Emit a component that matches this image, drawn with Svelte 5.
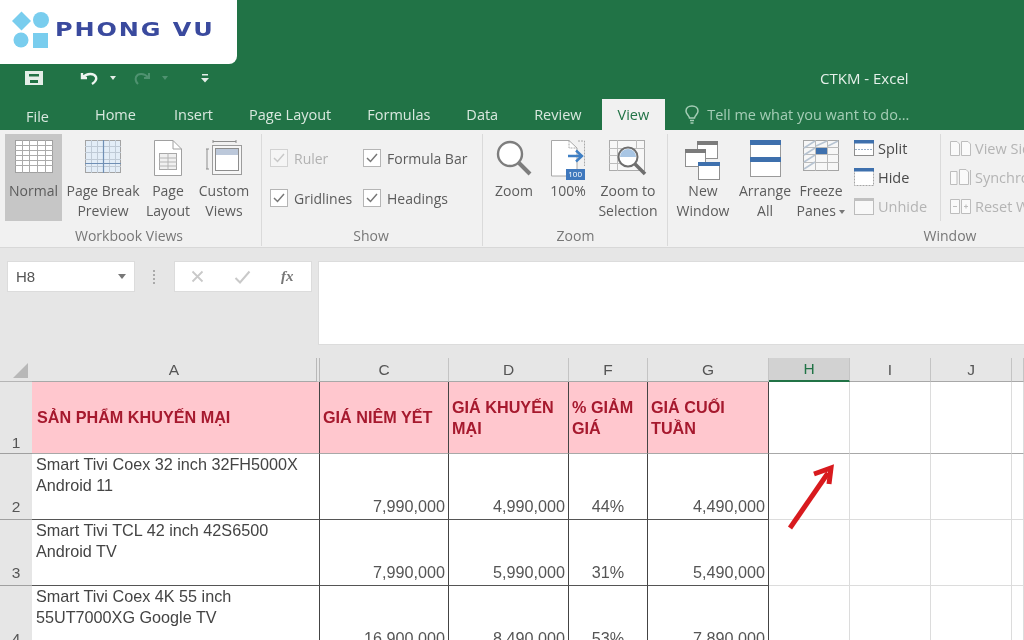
<script>
  const tabs = ["Home", "Insert", "Page Layout", "Formulas", "Data", "Review"];
  const cols = [
    { name: "A", kind: "first" },
    { name: "C", kind: "data" },
    { name: "D", kind: "data" },
    { name: "F", kind: "data" },
    { name: "G", kind: "data" },
    { name: "H", kind: "sel" },
    { name: "I", kind: "" },
    { name: "J", kind: "" },
    { name: "", kind: "" }
  ];
  const heads = ["SẢN PHẨM KHUYẾN MẠI", "GIÁ NIÊM YẾT", "GIÁ KHUYẾN MẠI", "% GIẢM GIÁ", "GIÁ CUỐI TUẦN"];
  const rows = [
    { n: 2, name: "Smart Tivi Coex 32 inch 32FH5000X Android 11", vals: ["7,990,000", "4,990,000", "44%", "4,490,000"] },
    { n: 3, name: "Smart Tivi TCL 42 inch 42S6500 Android TV", vals: ["7,990,000", "5,990,000", "31%", "5,490,000"] },
    { n: 4, name: "Smart Tivi Coex 4K 55 inch 55UT7000XG Google TV", vals: ["16,900,000", "8,490,000", "53%", "7,890,000"] }
  ];
</script>

<div class="app">
  <div class="logo">
    <svg width="38" height="38" viewBox="0 0 38 38">
      <path d="M0 10 L9.500 0.500 L19 10 L9.500 19.500 Z" fill="#79cdee" />
      <circle cx="29" cy="9" r="8" fill="#79cdee" />
      <circle cx="9" cy="29" r="7.500" fill="#79cdee" />
      <rect x="21" y="22" width="15" height="15" fill="#79cdee" />
    </svg>
    <span class="logo-text">PHONG VU</span>
  </div>

  <header class="top">
    <div class="qat">
      <svg class="save" width="18" height="14" viewBox="0 0 18 14">
        <path fill-rule="evenodd" d="M0 0 H18 V14 H0 Z M4 3 V5.500 H14 V3 Z M5 9 V12 H13 V9 Z" fill="#e4eee8" />
      </svg>
      <svg class="undo" width="20" height="14" viewBox="0 0 20 14">
        <path d="M2 2 V7 H7 M2.500 6.500 C7 2 14 2 16 6 C17 9 15 11 12 13" fill="none" stroke="#eef5f0" stroke-width="2.400" />
      </svg>
      <span class="caret"></span>
      <svg class="redo" width="18" height="14" viewBox="0 0 18 14">
        <path d="M16 2 V7 H11 M15.500 6.500 C11 2 5 2 3 6 C2 9 3 11 5 13" fill="none" stroke="#4f9270" stroke-width="2" />
      </svg>
      <span class="caret dim"></span>
      <svg class="more" width="8" height="10" viewBox="0 0 8 10">
        <path d="M1 1 H7 V2.500 H1 Z M0 5 H8 L4 9.500 Z" fill="#e4eee8" />
      </svg>
      <span class="title">CTKM - Excel</span>
    </div>
    <nav class="tabs">
      <span class="tab file">File</span>
      {#each tabs as t, i}
        <span class="tab" class:home={i === 0}>{t}</span>
      {/each}
      <span class="tab active">View</span>
      <span class="tell">
        <svg width="14" height="19" viewBox="0 0 14 19">
          <path d="M4.500 13 C4 10 1 9 1 6 C1 3 3.500 1 7 1 C10.500 1 13 3 13 6 C13 9 10 10 9.500 13 Z M5 15.500 H9 M5.500 18 H8.500" fill="none" stroke="#a5cdb6" stroke-width="1.500" />
        </svg>
        Tell me what you want to do...
      </span>
    </nav>
  </header>

  <section class="ribbon">
    <div class="group workbook">
      <div class="body">
        <div class="big normal active">
          <div class="icon">
            <svg width="38" height="33" viewBox="0 0 38 33">
              <rect x="0.500" y="0.500" width="37" height="32" fill="#fff" stroke="#a0a0a0" />
              <path d="M0 5.500 H38 M0 10.500 H38 M0 15.500 H38 M0 20.500 H38 M0 25.500 H38 M7.500 0 V33 M14.500 0 V33 M22.500 0 V33 M30.500 0 V33" stroke="#ababab" />
            </svg>
          </div>
          <span>Normal</span>
        </div>
        <div class="big pagebreak">
          <div class="icon">
            <svg width="36" height="33" viewBox="0 0 36 33">
              <rect x="0.500" y="0.500" width="35" height="32" fill="#e3edf7" stroke="#a3a3a3" />
              <path d="M0 6.500 H36 M0 12.500 H36 M0 19.500 H36 M0 26.500 H36 M6.500 0 V33 M12.500 0 V33 M24.500 0 V33 M30.500 0 V33" stroke="#bfcad6" />
              <path d="M18.500 0 V33 M0 23.500 H36" stroke="#6f8fb5" stroke-width="1.200" />
            </svg>
          </div>
          <span>Page Break<br />Preview</span>
        </div>
        <div class="big pagelayout">
          <div class="icon">
            <svg width="28" height="36" viewBox="0 0 28 36">
              <path d="M0.500 0.500 H19 L27.500 9 V35.500 H0.500 Z" fill="#fff" stroke="#a0a0a0" />
              <path d="M19 0.500 V9 H27.500" fill="none" stroke="#a0a0a0" />
              <rect x="5.500" y="13.500" width="17" height="16" fill="#f0f0f0" stroke="#a8a8a8" />
              <path d="M5 18 H23 M5 22 H23 M5 26 H23 M14 13 V30" stroke="#b4b4b4" />
            </svg>
          </div>
          <span>Page<br />Layout</span>
        </div>
        <div class="big custom">
          <div class="icon">
            <svg width="36" height="35" viewBox="0 0 36 35">
              <path d="M1 9 V29 M0 9 H3 M0 29 H3 M7 1.500 H30 M7 0 V3 M30 0 V3" fill="none" stroke="#8d8d8d" />
              <rect x="6.500" y="5.500" width="29" height="29" fill="#f6f6f6" stroke="#9c9c9c" />
              <rect x="9.500" y="8.500" width="23" height="22" fill="#fff" stroke="#8d8d8d" />
              <rect x="10" y="9" width="22" height="6" fill="#bcc8da" />
            </svg>
          </div>
          <span>Custom<br />Views</span>
        </div>
      </div>
      <div class="label">Workbook Views</div>
    </div>

    <div class="group show">
      <div class="body checks">
        <label class="check off"><span class="box"><svg width="12" height="10" viewBox="0 0 12 10"><path d="M1 5 L4.500 8.500 L11 1" /></svg></span>Ruler</label>
        <label class="check"><span class="box"><svg width="12" height="10" viewBox="0 0 12 10"><path d="M1 5 L4.500 8.500 L11 1" /></svg></span>Formula Bar</label>
        <label class="check"><span class="box"><svg width="12" height="10" viewBox="0 0 12 10"><path d="M1 5 L4.500 8.500 L11 1" /></svg></span>Gridlines</label>
        <label class="check"><span class="box"><svg width="12" height="10" viewBox="0 0 12 10"><path d="M1 5 L4.500 8.500 L11 1" /></svg></span>Headings</label>
      </div>
      <div class="label">Show</div>
    </div>

    <div class="group zoom">
      <div class="body">
        <div class="big zoom-btn">
          <div class="icon">
            <svg width="36" height="36" viewBox="0 0 36 36">
              <circle cx="14" cy="14" r="12" fill="#fff" stroke="#7d7d7d" stroke-width="2.400" />
              <path d="M23 23 L34 34" stroke="#7d7d7d" stroke-width="4" />
            </svg>
          </div>
          <span>Zoom</span>
        </div>
        <div class="big hundred">
          <div class="icon">
            <svg width="34" height="40" viewBox="0 0 34 40">
              <path d="M0.500 0.500 H18 L26 8 V36 H0.500 Z" fill="#fff" stroke="#a8a8a8" />
              <path d="M18 0.500 V8 H26 M27 1 H33.500 V26" fill="none" stroke="#a8a8a8" stroke-dasharray="2 1" />
              <path d="M17 16 H31 M25 10.500 L31 16 L25 21.500" fill="none" stroke="#3f7fc4" stroke-width="2.400" />
              <rect x="15" y="29" width="19" height="11" fill="#3f78bd" />
            </svg>
            <span class="mini">100</span>
          </div>
          <span>100%</span>
        </div>
        <div class="big selection">
          <div class="icon">
            <svg width="38" height="36" viewBox="0 0 38 36">
              <rect x="0.500" y="0.500" width="35" height="30" fill="#f7f7f7" stroke="#ababab" />
              <path d="M0 8.500 H36 M0 15.500 H12 M0 23.500 H12 M8.500 0 V31 M27.500 0 V8" stroke="#bdbdbd" />
              <circle cx="19" cy="17" r="9.500" fill="#fff" stroke="#6e6e6e" stroke-width="2" />
              <path d="M11 17 A8 8 0 0 1 27 17 Z" fill="#a9c6e4" />
              <path d="M26 24 L36 34" stroke="#6e6e6e" stroke-width="3.500" />
            </svg>
          </div>
          <span>Zoom to<br />Selection</span>
        </div>
      </div>
      <div class="label">Zoom</div>
    </div>

    <div class="group window">
      <div class="body">
        <div class="big newwin">
          <div class="icon">
            <svg width="36" height="40" viewBox="0 0 36 40">
              <rect x="12.500" y="1.500" width="20" height="17" fill="#fff" stroke="#8f8f8f" />
              <rect x="12" y="1" width="21" height="4" fill="#7b7b7b" />
              <rect x="0.500" y="9.500" width="20" height="17" fill="#fff" stroke="#8f8f8f" />
              <rect x="0" y="9" width="21" height="4" fill="#7b7b7b" />
              <rect x="13.500" y="22.500" width="21" height="17" fill="#fff" stroke="#8f8f8f" />
              <rect x="13" y="22" width="22" height="4" fill="#3e70ad" />
            </svg>
          </div>
          <span>New<br />Window</span>
        </div>
        <div class="big arrange">
          <div class="icon">
            <svg width="31" height="37" viewBox="0 0 31 37">
              <rect x="0.500" y="0.500" width="30" height="36" fill="#fff" stroke="#9a9a9a" />
              <rect x="0" y="0" width="31" height="5" fill="#3e70ad" />
              <rect x="0" y="17" width="31" height="5" fill="#3e70ad" />
            </svg>
          </div>
          <span>Arrange<br />All</span>
        </div>
        <div class="big freeze">
          <div class="icon">
            <svg width="36" height="32" viewBox="0 0 36 32">
              <rect x="0.500" y="0.500" width="35" height="30" fill="#f7f7f7" stroke="#a5a5a5" />
              <path d="M0 7.500 H36 M0 14.500 H36 M0 22.500 H36 M12.500 0 V31 M24.500 0 V31" stroke="#bbb" />
              <path d="M1 8 L12 1 M1 15 L12 8 M1 22 L12 15 M1 29 L12 22 M13 6 L24 1 M25 6 L35 1" stroke="#b7c4d2" stroke-width="1.500" />
              <rect x="13" y="8" width="11" height="6" fill="#3e70ad" />
            </svg>
          </div>
          <span>Freeze<br />Panes <i class="tiny"></i></span>
        </div>
        <div class="small-col">
          <div class="small">
            <svg width="20" height="16" viewBox="0 0 20 16">
              <rect x="0.500" y="0.500" width="19" height="15" fill="#fff" stroke="#8e8e8e" />
              <rect x="0" y="0" width="20" height="3.500" fill="#3e70ad" />
              <path d="M1 9.500 H19" stroke="#9ab0c8" stroke-dasharray="2 1" />
            </svg>
            Split
          </div>
          <div class="small">
            <svg width="20" height="18" viewBox="0 0 20 18">
              <rect x="0.500" y="0.500" width="19" height="17" fill="#fff" stroke="#a5a5a5" stroke-dasharray="2 1" />
              <rect x="0" y="0" width="20" height="3.500" fill="#3e70ad" />
            </svg>
            Hide
          </div>
          <div class="small off">
            <svg width="20" height="17" viewBox="0 0 20 17">
              <rect x="0.500" y="0.500" width="19" height="16" fill="#f8f8f8" stroke="#bcbcbc" />
              <rect x="0" y="0" width="20" height="3" fill="#c0c0c0" />
            </svg>
            Unhide
          </div>
        </div>
        <div class="small-col last">
          <div class="small off">
            <svg width="21" height="15" viewBox="0 0 21 15">
              <path d="M0.500 0.500 H7 L9.500 3 V14.500 H0.500 Z M11.500 0.500 H18 L20.500 3 V14.500 H11.500 Z" fill="#fafafa" stroke="#bdbdbd" />
            </svg>
            View Side by Side
          </div>
          <div class="small off">
            <svg width="21" height="17" viewBox="0 0 21 17">
              <path d="M0.500 2.500 H7 V15.500 H0.500 Z M9.500 0.500 H16 L18.500 3 V15.500 H9.500 Z M20.500 1 V16" fill="#fafafa" stroke="#bdbdbd" />
            </svg>
            Synchronous Scrolling
          </div>
          <div class="small off">
            <svg width="21" height="15" viewBox="0 0 21 15">
              <path d="M0.500 0.500 H9.500 V14.500 H0.500 Z M11.500 0.500 H20.500 V14.500 H11.500 Z M3 7.500 H7 M14 7.500 H18 M16 5.500 V9.500" fill="#fafafa" stroke="#bdbdbd" />
            </svg>
            Reset Window Position
          </div>
        </div>
      </div>
      <div class="label">Window</div>
    </div>
  </section>

  <section class="formula">
    <div class="namebox">H8<span class="name-caret"></span></div>
    <div class="grip"></div>
    <div class="fxbox">
      <svg width="13" height="13" viewBox="0 0 13 13"><path d="M1.500 1.500 L11.500 11.500 M11.500 1.500 L1.500 11.500" stroke="#c9c9c9" stroke-width="1.800" /></svg>
      <svg width="17" height="14" viewBox="0 0 17 14"><path d="M1.500 8 L6 12.500 L15.500 1.500" fill="none" stroke="#c9c9c9" stroke-width="2" /></svg>
      <span class="fx">fx</span>
    </div>
    <div class="input"></div>
  </section>

  <section class="sheet">
    <div class="corner"><span class="tri"></span></div>
    {#each cols as c}
      <div class="colhead {c.kind}">{c.name}</div>
    {/each}

    <div class="rownum r1">1</div>
    {#each heads as h, i}
      <div class="cell head" class:first={i === 0}>{h}</div>
    {/each}
    {#each Array(4) as _}
      <div class="cell blank r1b"></div>
    {/each}

    {#each rows as r}
      <div class="rownum r2">{r.n}</div>
      <div class="cell name">{r.name}</div>
      {#each r.vals as v, i}
        <div class="cell val" class:pct={i === 2}>{v}</div>
      {/each}
      {#each Array(4) as _}
        <div class="cell blank"></div>
      {/each}
    {/each}

    <svg class="arrow" width="52" height="70" viewBox="0 0 52 70">
      <path d="M4 64 L42 9" stroke="#d81a1e" stroke-width="5" fill="none" />
      <path d="M28 10 L45 4 L43 20" stroke="#d81a1e" stroke-width="5" fill="none" />
    </svg>
  </section>
</div>

<style>
  :global(body) {
    margin: 0;
  }

  .app {
    position: relative;
    width: 1024px;
    height: 640px;
    overflow: hidden;
    font-family: "Open Sans", sans-serif;
    background: #e6e6e6;
    color: #555;
    filter: blur(0.45px);
  }

  .logo {
    position: absolute;
    left: 0;
    top: 0;
    width: 237px;
    height: 64px;
    background: #fff;
    border-bottom-right-radius: 8px;
    display: flex;
    align-items: center;
    padding-left: 12px;
    box-sizing: border-box;
    z-index: 2;
  }

  .logo svg {
    margin-top: -4px;
  }

  .logo-text {
    margin-left: 5px;
    margin-top: -7px;
    font-family: "DejaVu Sans", sans-serif;
    font-weight: 700;
    font-size: 20px;
    letter-spacing: 1.600px;
    color: #3a4a9e;
    transform: scaleX(1.200);
    transform-origin: left center;
    white-space: nowrap;
  }

  .top {
    background: #217346;
    height: 130px;
    box-sizing: border-box;
    padding-top: 61px;
  }

  .qat {
    display: flex;
    align-items: center;
    height: 34px;
    padding-left: 25px;
    margin-bottom: 4px;
  }

  .undo {
    margin-left: 37px;
  }

  .caret {
    width: 0;
    height: 0;
    border-left: 3.500px solid transparent;
    border-right: 3.500px solid transparent;
    border-top: 4px solid #e4eee8;
    margin-left: 10px;
  }

  .caret.dim {
    border-top-color: #4f9270;
    margin-left: 11px;
  }

  .redo {
    margin-left: 17px;
  }

  .more {
    margin-left: 33px;
  }

  .title {
    margin-left: 611px;
    font-size: 15px;
    color: #e6f0ea;
  }

  .tabs {
    display: flex;
    align-items: stretch;
    height: 31px;
  }

  .tab {
    padding: 0 18px;
    font-size: 14.500px;
    line-height: 31px;
    color: #d9e8df;
    white-space: nowrap;
  }

  .tab.home {
    padding-right: 20px;
    padding-left: 18px;
  }

  .tab.file {
    padding: 0 28px 0 26px;
    line-height: 35px;
  }

  .tab.active {
    margin-left: 2px;
    padding: 0 16px;
    background: #f1f1f1;
    color: #217346;
  }

  .tell {
    display: flex;
    align-items: center;
    gap: 8px;
    margin-left: 20px;
    font-size: 14.500px;
    color: #a5cdb6;
    white-space: nowrap;
  }

  .ribbon {
    display: flex;
    height: 118px;
    box-sizing: border-box;
    background: #f1f1f1;
    border-bottom: 1px solid #d8d8d8;
    overflow: hidden;
  }

  .group {
    flex: none;
    display: flex;
    flex-direction: column;
    box-sizing: border-box;
    height: 112px;
    margin-top: 4px;
    border-right: 1px solid #dadada;
  }

  .body {
    display: flex;
    flex: 1;
  }

  .label {
    height: 20px;
    line-height: 20px;
    text-align: center;
    font-size: 14px;
    color: #777;
    white-space: nowrap;
  }

  .workbook {
    width: 262px;
    padding-left: 5px;
  }

  .workbook .label {
    margin-right: 8px;
  }

  .show {
    width: 221px;
    padding-left: 8px;
  }

  .show .label {
    margin-right: 10px;
  }

  .zoom {
    width: 185px;
    padding-left: 5px;
  }

  .zoom .label {
    margin-right: 4px;
  }

  .window {
    width: 562px;
    border-right: 0;
    padding-left: 2px;
  }

  .big {
    flex: none;
    height: 87px;
    box-sizing: border-box;
    padding-top: 6px;
    display: flex;
    flex-direction: column;
    align-items: center;
    text-align: center;
    font-size: 14px;
    line-height: 20px;
    color: #5c5c5c;
    white-space: nowrap;
  }

  .big.active {
    background: #c6c6c6;
  }

  .icon {
    position: relative;
    height: 41px;
    display: flex;
    align-items: flex-start;
  }

  .normal { width: 57px; }
  .pagebreak { width: 82px; }
  .pagelayout { width: 48px; }
  .custom { width: 64px; }
  .zoom-btn { width: 52px; }
  .hundred { width: 56px; }
  .selection { width: 64px; }
  .newwin { width: 66px; }
  .arrange { width: 58px; }
  .freeze { width: 54px; }

  .mini {
    position: absolute;
    right: 3px;
    top: 28px;
    font-size: 8px;
    line-height: 12px;
    color: #fff;
  }

  .tiny {
    display: inline-block;
    width: 0;
    height: 0;
    border-left: 3px solid transparent;
    border-right: 3px solid transparent;
    border-top: 4px solid #777;
    vertical-align: middle;
  }

  .checks {
    display: grid;
    grid-template-columns: 93px auto;
    grid-auto-rows: 20px;
    row-gap: 20px;
    padding-top: 14px;
  }

  .check {
    display: flex;
    align-items: center;
    gap: 6px;
    font-size: 14px;
    color: #5c5c5c;
    white-space: nowrap;
  }

  .check.off {
    color: #b2b2b2;
  }

  .box {
    width: 16px;
    height: 16px;
    display: flex;
    align-items: center;
    justify-content: center;
    background: #fff;
    border: 1px solid #b5b5b5;
  }

  .box path {
    fill: none;
    stroke: #777;
    stroke-width: 1.500;
  }

  .check.off .box {
    background: #f5f5f5;
    border-color: #d2d2d2;
  }

  .check.off .box path {
    stroke: #c8c8c8;
  }

  .small-col {
    flex: none;
    width: 87px;
    margin-left: 6px;
    height: 87px;
    box-sizing: border-box;
    padding-top: 4px;
    display: flex;
    flex-direction: column;
    gap: 9px;
    border-right: 1px solid #dadada;
  }

  .small-col.last {
    width: 200px;
    margin-left: 9px;
    border-right: 0;
  }

  .small {
    display: flex;
    align-items: center;
    gap: 4px;
    height: 20px;
    font-size: 14.500px;
    color: #4a4a4a;
    white-space: nowrap;
  }

  .small.off {
    color: #b4b4b4;
  }

  .formula {
    display: flex;
    align-items: flex-start;
    height: 110px;
    box-sizing: border-box;
    padding: 13px 0 0 7px;
    background: #e6e6e6;
  }

  .namebox {
    width: 128px;
    height: 31px;
    box-sizing: border-box;
    display: flex;
    align-items: center;
    justify-content: space-between;
    padding: 0 8px;
    background: #fff;
    border: 1px solid #dcdcdc;
    font-family: "Liberation Sans", sans-serif;
    font-size: 15px;
    color: #555;
  }

  .name-caret {
    border-left: 4.500px solid transparent;
    border-right: 4.500px solid transparent;
    border-top: 5px solid #777;
  }

  .grip {
    width: 3px;
    height: 14px;
    margin: 9px 18px 0 18px;
    border-left: 2px dotted #aaa;
    box-sizing: border-box;
  }

  .fxbox {
    width: 138px;
    height: 31px;
    box-sizing: border-box;
    display: flex;
    align-items: center;
    gap: 30px;
    padding-left: 16px;
    background: #fff;
    border: 1px solid #dcdcdc;
  }

  .fx {
    font-family: "Liberation Serif", serif;
    font-style: italic;
    font-weight: 700;
    font-size: 15px;
    color: #777;
  }

  .input {
    flex: 1;
    height: 82px;
    margin-left: 6px;
    background: #fff;
    border: 1px solid #dcdcdc;
    border-right: 0;
  }

  .sheet {
    position: relative;
    display: grid;
    grid-template-columns: 32px 288px 129px 120px 79px 121px 81px 81px 81px 12px;
    grid-template-rows: 24px 72px 66px 66px 66px;
    background: #fff;
    font-family: "Liberation Sans", sans-serif;
  }

  .corner {
    position: relative;
    background: #e6e6e6;
    border-bottom: 1px solid #b5b5b5;
  }

  .tri {
    position: absolute;
    left: 13px;
    top: 5px;
    width: 0;
    height: 0;
    border-left: 15px solid transparent;
    border-bottom: 15px solid #b8b8b8;
  }

  .colhead {
    display: flex;
    align-items: center;
    justify-content: center;
    box-sizing: border-box;
    background: #e6e6e6;
    border-bottom: 1px solid #a8a8a8;
    border-right: 1px solid #c4c4c4;
    font-size: 15.500px;
    color: #555;
  }

  .colhead.first {
    border-right: 4px double #b8b8b8;
  }

  .colhead.sel {
    background: #d2d2d2;
    color: #217346;
    border-bottom: 2px solid #217346;
  }

  .rownum {
    box-sizing: border-box;
    display: flex;
    align-items: flex-end;
    justify-content: center;
    padding-bottom: 1px;
    background: #e6e6e6;
    border-bottom: 1px solid #a0a0a0;
    font-size: 15.500px;
    color: #555;
  }

  .rownum.r2 {
    padding-bottom: 3px;
  }

  .cell {
    box-sizing: border-box;
    border-right: 1px solid #444;
    border-bottom: 1px solid #555;
    font-size: 16.200px;
    line-height: 21px;
  }

  .cell.head {
    display: flex;
    align-items: center;
    padding: 0 2px 0 3px;
    background: #ffc7ce;
    border-bottom-color: #a8a8a8;
    color: #a6192e;
    font-weight: 700;
    line-height: 21px;
  }

  .cell.head.first {
    padding-left: 5px;
  }

  .cell.name {
    padding: 0 3px 0 4px;
    color: #444;
  }

  .cell.val {
    display: flex;
    align-items: flex-end;
    justify-content: flex-end;
    padding: 0 3px 2px 0;
    color: #555;
  }

  .cell.val.pct {
    justify-content: center;
    padding-right: 0;
  }

  .cell.blank {
    border-right: 1px solid #dcdcdc;
    border-bottom: 1px solid #dcdcdc;
  }

  .cell.blank.r1b {
    border-bottom-color: #a8a8a8;
  }

  .arrow {
    position: absolute;
    left: 786px;
    top: 106px;
  }
</style>
